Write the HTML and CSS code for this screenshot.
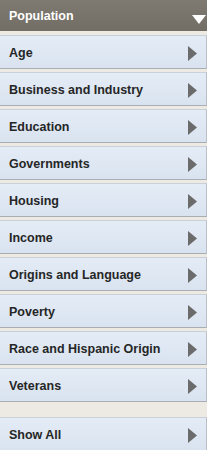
FILE: index.html
```html
<!DOCTYPE html>
<html>
<head>
<meta charset="utf-8">
<link rel="stylesheet" href="styles.css">
</head>
<body>
<div class="panel">
  <div class="header">
    <span class="header-title">Population</span>
    <svg class="caret-down" width="14" height="9" viewBox="0 0 14 9"><polygon points="0,0 14,0 7,9" fill="#ffffff"/></svg>
  </div>
  <ul class="list">
    <li class="item"><span class="label">Age</span><svg class="arrow" width="9" height="15" viewBox="0 0 9 15"><polygon points="0,0 9,7.5 0,15" fill="#6b6b6b"/></svg></li>
    <li class="item"><span class="label">Business and Industry</span><svg class="arrow" width="9" height="15" viewBox="0 0 9 15"><polygon points="0,0 9,7.5 0,15" fill="#6b6b6b"/></svg></li>
    <li class="item"><span class="label">Education</span><svg class="arrow" width="9" height="15" viewBox="0 0 9 15"><polygon points="0,0 9,7.5 0,15" fill="#6b6b6b"/></svg></li>
    <li class="item"><span class="label">Governments</span><svg class="arrow" width="9" height="15" viewBox="0 0 9 15"><polygon points="0,0 9,7.5 0,15" fill="#6b6b6b"/></svg></li>
    <li class="item"><span class="label">Housing</span><svg class="arrow" width="9" height="15" viewBox="0 0 9 15"><polygon points="0,0 9,7.5 0,15" fill="#6b6b6b"/></svg></li>
    <li class="item"><span class="label">Income</span><svg class="arrow" width="9" height="15" viewBox="0 0 9 15"><polygon points="0,0 9,7.5 0,15" fill="#6b6b6b"/></svg></li>
    <li class="item"><span class="label">Origins and Language</span><svg class="arrow" width="9" height="15" viewBox="0 0 9 15"><polygon points="0,0 9,7.5 0,15" fill="#6b6b6b"/></svg></li>
    <li class="item"><span class="label">Poverty</span><svg class="arrow" width="9" height="15" viewBox="0 0 9 15"><polygon points="0,0 9,7.5 0,15" fill="#6b6b6b"/></svg></li>
    <li class="item"><span class="label">Race and Hispanic Origin</span><svg class="arrow" width="9" height="15" viewBox="0 0 9 15"><polygon points="0,0 9,7.5 0,15" fill="#6b6b6b"/></svg></li>
    <li class="item"><span class="label">Veterans</span><svg class="arrow" width="9" height="15" viewBox="0 0 9 15"><polygon points="0,0 9,7.5 0,15" fill="#6b6b6b"/></svg></li>
  </ul>
  <div class="show-all item"><span class="label">Show All</span><svg class="arrow" width="9" height="15" viewBox="0 0 9 15"><polygon points="0,0 9,7.5 0,15" fill="#6b6b6b"/></svg></div>
</div>
</body>
</html>
```
FILE: styles.css
```css
html, body {
  margin: 0;
  padding: 0;
  background: #ede9e3;
}
.panel {
  width: 207px;
  font-family: "Liberation Sans", Arial, sans-serif;
  font-weight: bold;
  font-size: 12.5px;
}
.header {
  height: 31px;
  box-sizing: border-box;
  background: linear-gradient(#7e7971, #726d65);
  display: flex;
  align-items: center;
  justify-content: space-between;
  padding: 0 1px 0 9px;
  color: #ffffff;
}
.caret-down {
  margin-top: 8px;
}
.list {
  list-style: none;
  margin: 0;
  padding: 4px 0 0 0;
  display: flex;
  flex-direction: column;
  gap: 3px;
}
.item {
  height: 34px;
  box-sizing: border-box;
  display: flex;
  align-items: center;
  justify-content: space-between;
  padding: 0 9px 0 9px;
  background: linear-gradient(#e4ecf6, #d9e3ef);
  border-top: 1px solid #c9d0d9;
  border-bottom: 1px solid #a9aeb4;
  border-right: 1px solid #b9c0c9;
  color: #262626;
}
.label {
  margin-top: 2px;
}
.arrow {
  margin-top: 3px;
}
.show-all {
  margin-top: 15px;
}
```
